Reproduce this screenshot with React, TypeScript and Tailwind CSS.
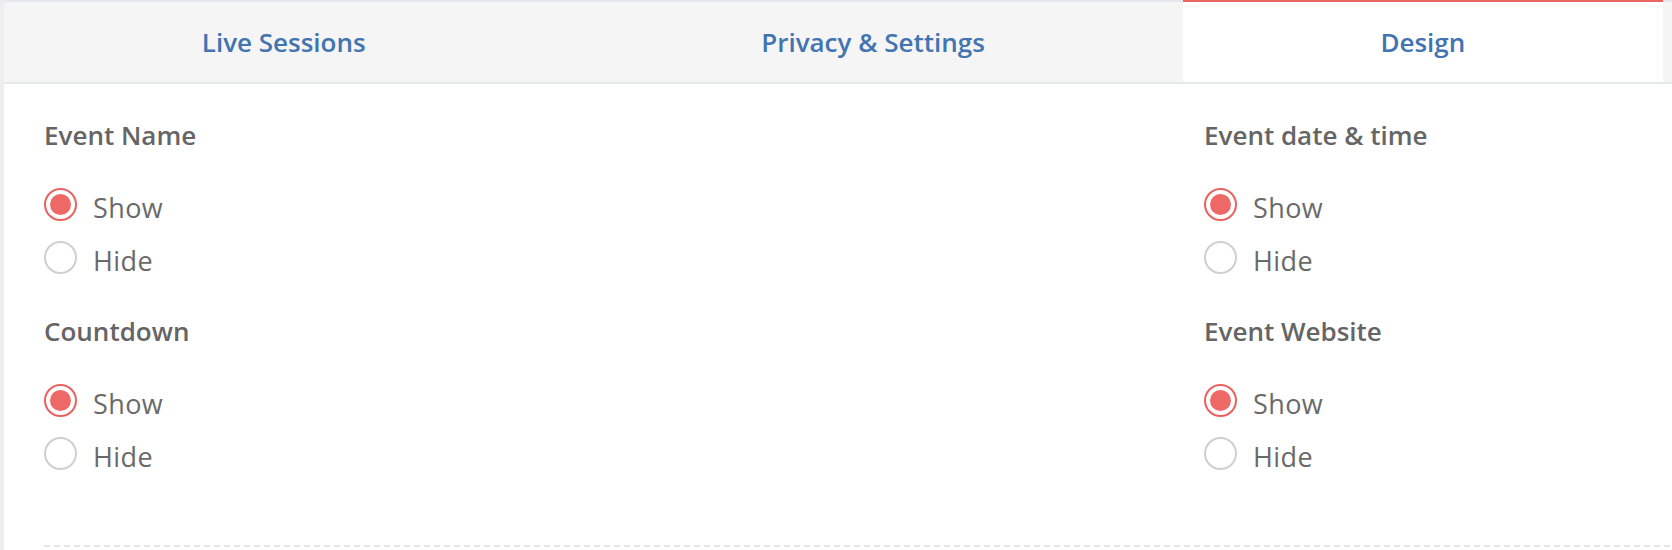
import React from "react";

const tabs = [
  { label: "Live Sessions", active: false },
  { label: "Privacy & Settings", active: false },
  { label: "Design", active: true },
];

function Radio({ checked }: { checked: boolean }) {
  return checked ? (
    <span className="flex h-[33px] w-[33px] shrink-0 items-center justify-center rounded-full border-2 border-[#ea625f] bg-white">
      <span className="h-[21px] w-[21px] rounded-full bg-[#ee6866]" />
    </span>
  ) : (
    <span className="h-[33px] w-[33px] shrink-0 rounded-full border-2 border-[#cfcfcf] bg-white" />
  );
}

function Section({ title, className = "" }: { title: string; className?: string }) {
  return (
    <div className={className}>
      <div className="text-[26px] font-semibold leading-[30px] text-[#656565]">{title}</div>
      <div className="mt-[38px] flex flex-col gap-[20px]">
        {["Show", "Hide"].map((opt, i) => (
          <label key={opt} className="flex h-[33px] items-start gap-[16px]">
            <Radio checked={i === 0} />
            <span className="pt-[3px] text-[27px] leading-[33px] tracking-[0.4px] text-[#6a6a6a]">{opt}</span>
          </label>
        ))}
      </div>
    </div>
  );
}

export default function App() {
  return (
    <div
      className="min-h-screen w-full border-l-4 border-l-[#eeeeee] bg-white"
      style={{ fontFamily: "'Open Sans', 'Noto Sans', sans-serif" }}
    >
      <div className="flex border-y-2 border-t-[#e6eaee] border-b-[#e4e9ee] bg-[#f5f5f5] pr-[9px]">
        {tabs.map((t) => (
          <div
            key={t.label}
            className={
              t.active
                ? "-mt-[2px] flex h-[82px] flex-auto items-center justify-center border-t-2 border-t-[#ea6461] bg-white"
                : "flex h-[80px] flex-auto items-center justify-center"
            }
          >
            <span className="text-[26px] font-semibold text-[#4274b1]">{t.label}</span>
          </div>
        ))}
      </div>
      <div className="pl-[40px] pr-[40px] pt-[36px]">
        <div className="flex">
          <div className="flex w-[1160px] flex-col gap-[42px]">
            <Section title="Event Name" />
            <Section title="Countdown" />
          </div>
          <div className="flex flex-col gap-[42px]">
            <Section title="Event date & time" />
            <Section title="Event Website" />
          </div>
        </div>
        <div className="mt-[75px] -mr-[40px] h-[2px] bg-[linear-gradient(to_right,#e6e6e6_6px,transparent_6px)] bg-[length:10px_2px]" />
      </div>
    </div>
  );
}
